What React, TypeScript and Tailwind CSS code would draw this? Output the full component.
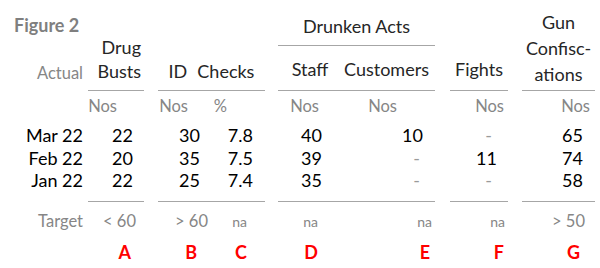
import React from "react";

const font = { fontFamily: "Lato, 'Open Sans', sans-serif" };

type Col = {
  start: string;
  nos: string;
  nosPr: string;
  dataPr: string;
  dashPr: string;
  target: string;
  targetPr: string;
  targetSmall: boolean;
  letter: string;
  letterPr: string;
};

const cols: Col[] = [
  { start: "col-start-2", nos: "Nos", nosPr: "pr-[27px]", dataPr: "pr-[11px]", dashPr: "pr-[11px]", target: "< 60", targetPr: "pr-[8px]", targetSmall: false, letter: "A", letterPr: "pr-[13px]" },
  { start: "col-start-4", nos: "Nos", nosPr: "pr-[20px]", dataPr: "pr-[8px]", dashPr: "pr-[8px]", target: "> 60", targetPr: "pr-[0px]", targetSmall: false, letter: "B", letterPr: "pr-[11px]" },
  { start: "col-start-5", nos: "%", nosPr: "pr-[38px]", dataPr: "pr-[12px]", dashPr: "pr-[12px]", target: "na", targetPr: "pr-[18px]", targetSmall: true, letter: "C", letterPr: "pr-[18px]" },
  { start: "col-start-7", nos: "Nos", nosPr: "pr-[21px]", dataPr: "pr-[18px]", dashPr: "pr-[18px]", target: "na", targetPr: "pr-[22px]", targetSmall: true, letter: "D", letterPr: "pr-[22px]" },
  { start: "col-start-8", nos: "Nos", nosPr: "pr-[38px]", dataPr: "pr-[12px]", dashPr: "pr-[15px]", target: "na", targetPr: "pr-[3px]", targetSmall: true, letter: "E", letterPr: "pr-[5px]" },
  { start: "col-start-10", nos: "Nos", nosPr: "pr-[4px]", dataPr: "pr-[11px]", dashPr: "pr-[16px]", target: "na", targetPr: "pr-[3px]", targetSmall: true, letter: "F", letterPr: "pr-[4px]" },
  { start: "col-start-12", nos: "Nos", nosPr: "pr-[5px]", dataPr: "pr-[12px]", dashPr: "pr-[12px]", target: "> 50", targetPr: "pr-[10px]", targetSmall: false, letter: "G", letterPr: "pr-[15px]" },
];

const rows = [
  { label: "Mar 22", values: ["22", "30", "7.8", "40", "10", "-", "65"] },
  { label: "Feb 22", values: ["20", "35", "7.5", "39", "-", "11", "74"] },
  { label: "Jan 22", values: ["22", "25", "7.4", "35", "-", "-", "58"] },
];

const grid = "grid grid-cols-[88px_56px_14px_50px_57px_13px_62px_95px_15px_58px_14px_73px]";

export default function App() {
  return (
    <div className="h-[268px] w-[600px] overflow-hidden bg-white" style={font}>
      {/* column headings */}
      <div className={`${grid} h-[91px] text-[18px] text-[#262626]`}>
        <div className="col-start-1 flex flex-col justify-between pb-[6px] pr-[5px] pt-[13px]">
          <div className="pl-[14px] text-[18px] font-bold leading-[24px] text-[#7f7f7f]">Figure 2</div>
          <div className="text-right text-[16.5px] leading-[24px] text-[#868686]">Actual</div>
        </div>
        <div className="col-start-2 flex flex-col justify-end border-b border-[#a6a6a6] pb-[7px] pr-[3px] text-right leading-[24px]">
          <div>Drug</div>
          <div>Busts</div>
        </div>
        <div className="col-span-2 col-start-4 flex items-end justify-center gap-[10px] border-b border-[#a6a6a6] pb-[7px] leading-[24px]">
          <span>ID</span>
          <span>Checks</span>
        </div>
        <div className="col-span-2 col-start-7 flex flex-col border-b border-[#a6a6a6]">
          <div className="h-[46px] border-b border-[#a6a6a6] pt-[14px] text-center leading-[24px]">Drunken Acts</div>
          <div className="grid flex-1 grid-cols-[62px_95px] items-end pb-[9px] leading-[24px]">
            <div className="pl-[2px] text-center">Staff</div>
            <div className="pr-[2px] text-center">Customers</div>
          </div>
        </div>
        <div className="col-start-10 flex items-end justify-center border-b border-[#a6a6a6] pb-[9px] leading-[24px]">
          Fights
        </div>
        <div className="col-start-12 flex flex-col items-center justify-end border-b border-[#a6a6a6] pb-[3px] leading-[26px]">
          <div>Gun</div>
          <div>Confisc-</div>
          <div>ations</div>
        </div>
      </div>

      {/* units */}
      <div className={`${grid} h-[33px] pt-[4px] text-[16.5px] leading-[22px] text-[#868686]`}>
        {cols.map((c) => (
          <div key={c.letter} className={`${c.start} text-right ${c.nosPr}`}>
            {c.nos}
          </div>
        ))}
      </div>

      {/* monthly figures */}
      <div className="pb-[9.5px]">
        {rows.map((r) => (
          <div key={r.label} className={`${grid} h-[22.5px] text-[18px] leading-[22.5px] text-black`}>
            <div className="col-start-1 pr-[5px] text-right">{r.label}</div>
            {cols.map((c, i) =>
              r.values[i] === "-" ? (
                <div key={c.letter} className={`${c.start} text-right text-[#9a9a9a] ${c.dashPr}`}>
                  -
                </div>
              ) : (
                <div key={c.letter} className={`${c.start} text-right ${c.dataPr}`}>
                  {r.values[i]}
                </div>
              ),
            )}
          </div>
        ))}
      </div>

      {/* rule above targets */}
      <div className={`${grid} h-px`}>
        <div className="col-start-2 bg-[#a6a6a6]" />
        <div className="col-span-2 col-start-4 bg-[#a6a6a6]" />
        <div className="col-span-2 col-start-7 bg-[#a6a6a6]" />
        <div className="col-start-10 bg-[#a6a6a6]" />
        <div className="col-start-12 bg-[#a6a6a6]" />
      </div>

      {/* targets */}
      <div className={`${grid} items-baseline pt-[8px] text-[16.5px] leading-[22px] text-[#868686]`}>
        <div className="col-start-1 pr-[5px] text-right">Target</div>
        {cols.map((c) => (
          <div key={c.letter} className={`${c.start} text-right ${c.targetPr} ${c.targetSmall ? "text-[14px]" : ""}`}>
            {c.target}
          </div>
        ))}
      </div>

      {/* column letters */}
      <div className={`${grid} pt-[8px] text-[18px] font-bold leading-[22px] text-[#ff0000]`}>
        {cols.map((c) => (
          <div key={c.letter} className={`${c.start} text-right ${c.letterPr}`}>
            {c.letter}
          </div>
        ))}
      </div>
    </div>
  );
}
